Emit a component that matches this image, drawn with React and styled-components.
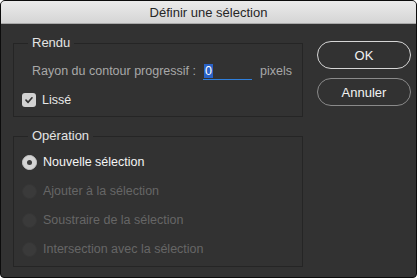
import React from 'react';
import styled, { createGlobalStyle } from 'styled-components';

const GlobalStyle = createGlobalStyle`
  html, body {
    margin: 0;
    padding: 0;
    background: #ffffff;
  }
  body {
    font-family: "Liberation Sans", Arial, sans-serif;
    font-size: 12.5px;
  }
`;

const Window = styled.div`
  width: 417px;
  height: 278px;
  box-sizing: border-box;
  border: 1px solid #0c0c0c;
  border-radius: 5px 5px 4px 4px;
  overflow: hidden;
  background: #323232;
  display: flex;
  flex-direction: column;
`;

const TitleBar = styled.div`
  height: 21px;
  flex-shrink: 0;
  border-bottom: 1px solid #a9a9a9;
  background: linear-gradient(#ebebeb, #d5d5d5);
  display: flex;
  align-items: center;
  justify-content: center;
  color: #262626;
  font-size: 13px;
  padding-top: 1px;
  box-sizing: content-box;
`;

const Body = styled.div`
  display: flex;
  padding: 11px 0 0 12px;
`;

const MainColumn = styled.div`
  width: 290px;
  display: flex;
  flex-direction: column;
  gap: 11px;
`;

const Group = styled.fieldset`
  margin: 0;
  border: 1px solid #252525;
  padding: ${p => p.$pad};
  min-width: 0;
  display: flex;
  flex-direction: column;
  gap: 9px;
`;

const Legend = styled.legend`
  margin-left: 6px;
  padding: 0 4px;
  line-height: 16px;
  color: #e4e4e4;
  font-size: 13px;
`;

const Row = styled.div`
  height: 20px;
  display: flex;
  align-items: center;
  white-space: nowrap;
  padding-left: ${p => p.$indent || 0}px;
  color: ${p => p.$color || '#e8e8e8'};
`;

const FieldInput = styled.span`
  width: 48px;
  height: 16px;
  margin-left: 7px;
  border-bottom: 1px solid #2f7fdc;
  display: flex;
  align-items: center;
  padding-left: 1px;
  margin-top: 1px;
`;

const Selected = styled.span`
  background: #2a62c6;
  color: #ffffff;
  line-height: 14px;
  padding: 0 1px;
`;

const Unit = styled.span`
  margin-left: 8px;
`;

const Box = styled.span`
  width: 14px;
  height: 14px;
  border-radius: 3px;
  background: #d2d2d2;
  display: flex;
  align-items: center;
  justify-content: center;
  margin-right: 6px;
`;

const Radio = styled.span`
  width: 15px;
  height: 15px;
  border-radius: 50%;
  box-sizing: border-box;
  background: ${p => (p.$on ? '#d4d4d4' : '#3a3a3a')};
  border: 1px solid ${p => (p.$on ? '#c8c8c8' : '#363636')};
  display: flex;
  align-items: center;
  justify-content: center;
  margin-right: 6px;
  flex-shrink: 0;
`;

const Dot = styled.span`
  width: 5px;
  height: 5px;
  border-radius: 50%;
  background: #3a3a3a;
`;

const SideColumn = styled.div`
  margin-left: 14px;
  padding-top: 6px;
  display: flex;
  flex-direction: column;
  gap: 9px;
`;

const Button = styled.div`
  width: 94px;
  height: 28px;
  box-sizing: border-box;
  border-radius: 14px;
  border: 1px solid ${p => (p.$primary ? '#d6d6d6' : '#8a8a8a')};
  color: #f2f2f2;
  font-size: 13px;
  display: flex;
  align-items: center;
  justify-content: center;
`;

const options = [
  { label: 'Nouvelle sélection', on: true },
  { label: 'Ajouter à la sélection' },
  { label: 'Soustraire de la sélection' },
  { label: 'Intersection avec la sélection' },
];

export default function App() {
  return (
    <>
      <GlobalStyle />
      <Window>
        <TitleBar>Définir une sélection</TitleBar>
        <Body>
          <MainColumn>
            <Group $pad="10px 8px 6px 8px">
              <Legend>Rendu</Legend>
              <Row $indent={10} $color="#a8a8a8">
                Rayon du contour progressif :
                <FieldInput>
                  <Selected>0</Selected>
                </FieldInput>
                <Unit>pixels</Unit>
              </Row>
              <Row>
                <Box>
                  <svg width="10" height="10" viewBox="0 0 10 10">
                    <path d="M2 5.2 L4.1 7.3 L8 2.8" fill="none" stroke="#333" strokeWidth="1.7" strokeLinecap="round" strokeLinejoin="round" />
                  </svg>
                </Box>
                Lissé
              </Row>
            </Group>
            <Group $pad="8px 8px 7px 8px">
              <Legend>Opération</Legend>
              {options.map(o => (
                <Row key={o.label} $color={o.on ? '#f4f4f4' : '#666666'}>
                  <Radio $on={o.on}>{o.on && <Dot />}</Radio>
                  {o.label}
                </Row>
              ))}
            </Group>
          </MainColumn>
          <SideColumn>
            <Button $primary>OK</Button>
            <Button>Annuler</Button>
          </SideColumn>
        </Body>
      </Window>
    </>
  );
}
